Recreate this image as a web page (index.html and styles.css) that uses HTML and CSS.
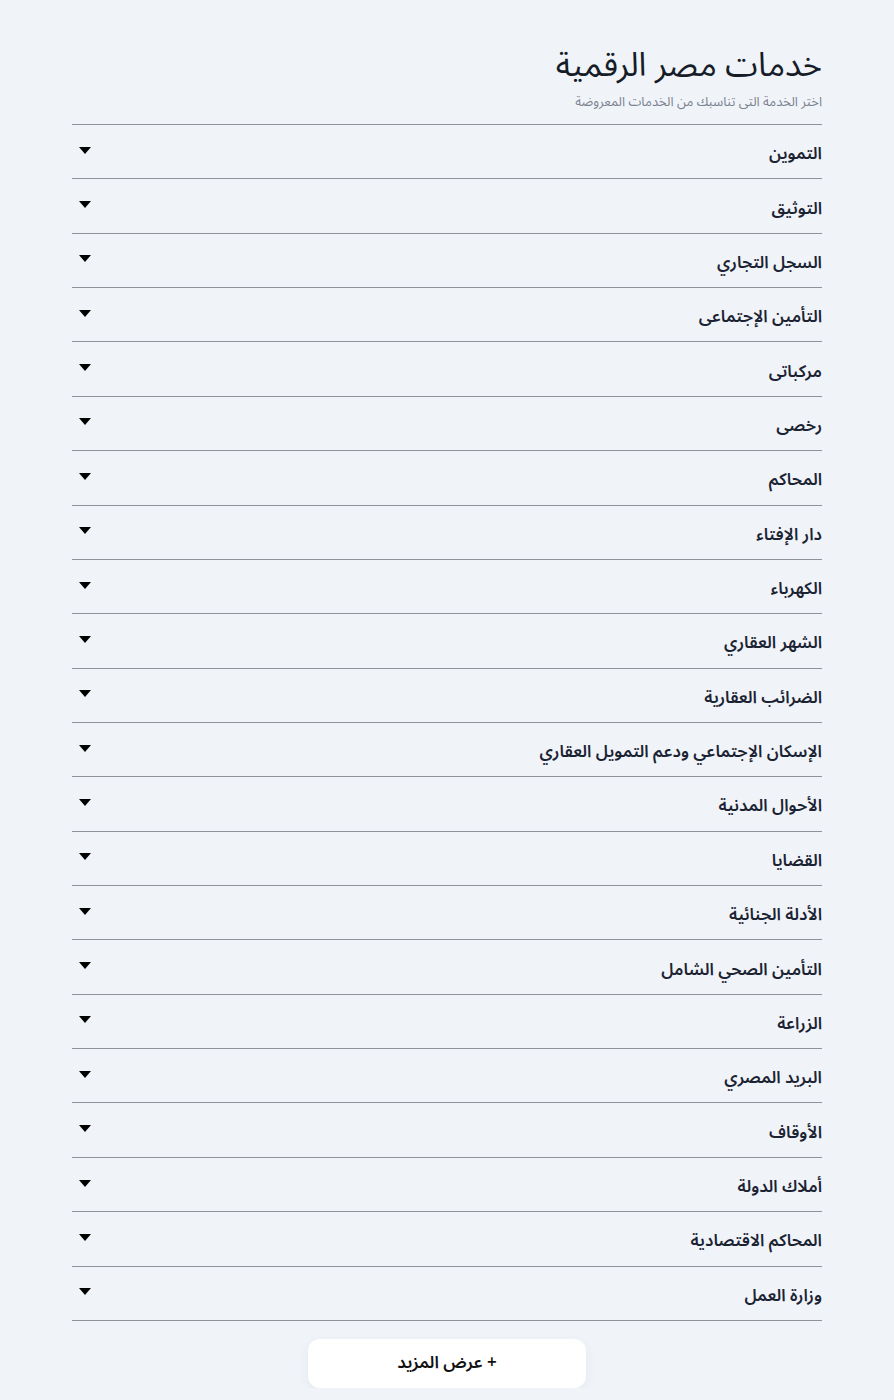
FILE: index.html
```html
<!DOCTYPE html>
<html lang="ar" dir="rtl">
<head>
  <meta charset="utf-8">
  <title>خدمات مصر الرقمية</title>
  <link rel="stylesheet" href="styles.css">
</head>
<body>
  <div class="services">
    <h1 class="title">خدمات مصر الرقمية</h1>
    <p class="subtitle">اختر الخدمة التى تناسبك من الخدمات المعروضة</p>

    <div class="list">
      <div class="item"><span>التموين</span><i class="arrow"></i></div>
      <div class="item"><span>التوثيق</span><i class="arrow"></i></div>
      <div class="item"><span>السجل التجاري</span><i class="arrow"></i></div>
      <div class="item"><span>التأمين الإجتماعى</span><i class="arrow"></i></div>
      <div class="item"><span>مركباتى</span><i class="arrow"></i></div>
      <div class="item"><span>رخصى</span><i class="arrow"></i></div>
      <div class="item"><span>المحاكم</span><i class="arrow"></i></div>
      <div class="item"><span>دار الإفتاء</span><i class="arrow"></i></div>
      <div class="item"><span>الكهرباء</span><i class="arrow"></i></div>
      <div class="item"><span>الشهر العقاري</span><i class="arrow"></i></div>
      <div class="item"><span>الضرائب العقارية</span><i class="arrow"></i></div>
      <div class="item"><span>الإسكان الإجتماعي ودعم التمويل العقاري</span><i class="arrow"></i></div>
      <div class="item"><span>الأحوال المدنية</span><i class="arrow"></i></div>
      <div class="item"><span>القضايا</span><i class="arrow"></i></div>
      <div class="item"><span>الأدلة الجنائية</span><i class="arrow"></i></div>
      <div class="item"><span>التأمين الصحي الشامل</span><i class="arrow"></i></div>
      <div class="item"><span>الزراعة</span><i class="arrow"></i></div>
      <div class="item"><span>البريد المصري</span><i class="arrow"></i></div>
      <div class="item"><span>الأوقاف</span><i class="arrow"></i></div>
      <div class="item"><span>أملاك الدولة</span><i class="arrow"></i></div>
      <div class="item"><span>المحاكم الاقتصادية</span><i class="arrow"></i></div>
      <div class="item"><span>وزارة العمل</span><i class="arrow"></i></div>
    </div>

    <div class="more">
      <button class="more-button">+ عرض المزيد</button>
    </div>
  </div>
</body>
</html>
```

FILE: styles.css
```css
body {
  margin: 0;
  background-color: #f0f4f9;
  font-family: "Noto Sans Arabic", "DejaVu Sans", "Noto Sans", sans-serif;
  color: #1b2333;
}

.services {
  max-width: 750px;
  margin: 0 auto;
  padding-top: 44px;
}

.title {
  margin: 0;
  font-size: 33px;
  font-weight: 400;
  line-height: 44px;
  color: #161c28;
}

.subtitle {
  margin: 5px 0 13px;
  font-size: 13px;
  line-height: 18px;
  color: #7b8290;
}

.list {
  border-top: 1px solid #8e939b;
}

.item {
  display: flex;
  align-items: center;
  justify-content: space-between;
  height: 53.36px;
  border-bottom: 1px solid #8e939b;
  font-size: 16.8px;
  font-weight: 600;
}

.item span {
  padding-top: 4px;
}

.arrow {
  width: 0;
  height: 0;
  margin-left: 7px;
  margin-bottom: 3px;
  border-left: 6.5px solid transparent;
  border-right: 6.5px solid transparent;
  border-top: 7px solid #000;
}

.more {
  display: flex;
  justify-content: center;
  padding-top: 18px;
}

.more-button {
  width: 278px;
  height: 49px;
  border: none;
  border-radius: 12px;
  background-color: #fff;
  box-shadow: 0 4px 12px rgba(40, 60, 90, 0.06);
  font-family: inherit;
  font-size: 17px;
  font-weight: 600;
  color: #111;
}
```
